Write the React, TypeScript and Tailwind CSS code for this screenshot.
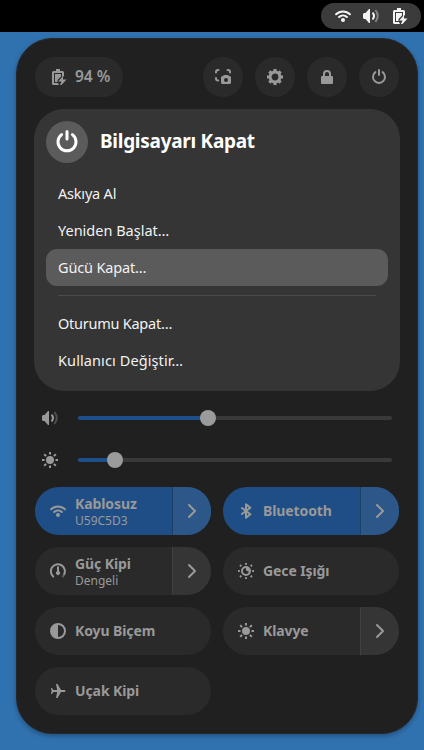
import type { ReactNode } from "react";

function Icon({ children, size = 16 }: { children: ReactNode; size?: number }) {
  return (
    <svg width={size} height={size} viewBox="0 0 16 16" fill="currentColor" className="block shrink-0">
      {children}
    </svg>
  );
}

const line = { fill: "none", stroke: "currentColor", strokeWidth: 2 } as const;

const Wifi = () => (
  <Icon>
    <path {...line} strokeLinecap="round" d="M1.1 6.3a9.8 9.8 0 0 1 13.8 0M4.1 9a5.7 5.7 0 0 1 7.8 0" />
    <circle cx="8" cy="12" r="2" />
  </Icon>
);

const Volume = () => (
  <Icon>
    <path d="M0 6l1-1h1.500L6 1h1v14H6l-3.500-4H1l-1-1z" />
    <path {...line} strokeLinecap="round" d="M10 5.200c1.300 1.700 1.300 3.900 0 5.600" />
    <path {...line} opacity=".4" d="M12.400 2.200c3.100 3.400 3.100 8.200 0 11.600" />
  </Icon>
);

const Battery = () => (
  <Icon>
    <path d="M5 0h4v2h2.500A1.500 1.500 0 0 1 13 3.500V7l-2 1.500V4H3v10h4l1 2H2.500A1.500 1.500 0 0 1 1 14.500v-11A1.500 1.500 0 0 1 2.500 2H5z" />
    <path d="M4 5h6v2.500L6.500 11v2H4z" />
    <path d="M12 7v3.500h3.500L10.500 16H9l1.500-3.500H7.200z" />
  </Icon>
);

const Screenshot = () => (
  <Icon>
    <path {...line} strokeLinecap="round" d="M1 3.500V3a2 2 0 0 1 2-2h.5M12.500 1h.5a2 2 0 0 1 2 2v.5M1 9v.5a2 2 0 0 0 2 2h.2" />
    <path fillRule="evenodd" d="M8 7l1-1h4l1 1h.5A1.500 1.500 0 0 1 16 8.500v5a1.500 1.500 0 0 1-1.500 1.500h-7A1.500 1.500 0 0 1 6 13.500v-5A1.500 1.500 0 0 1 7.500 7zm3 2a2 2 0 1 0 0 4 2 2 0 0 0 0-4z" />
  </Icon>
);

const Gear = () => (
  <Icon>
    <circle cx="8" cy="8" r="4.900" fill="none" stroke="currentColor" strokeWidth="3" />
    <path d="M6.400 0h3.200v2.500H6.400zM6.400 13.500h3.200V16H6.400zM0 6.400h2.500v3.200H0zM13.500 6.400H16v3.200h-2.500z" />
    <path d="M6.400 0h3.200v2.500H6.400zM6.400 13.500h3.200V16H6.400zM0 6.400h2.500v3.200H0zM13.500 6.400H16v3.200h-2.500z" transform="rotate(45 8 8)" />
  </Icon>
);

const Lock = () => (
  <Icon>
    <path {...line} d="M5 8V5a3 3 0 0 1 6 0v3" />
    <rect x="2" y="7" width="12" height="8" rx="1" />
  </Icon>
);

const Power = ({ size = 16 }: { size?: number }) => (
  <Icon size={size}>
    <path {...line} strokeLinecap="round" d="M4.400 3.100a6 6 0 1 0 7.200 0M8 1v5" />
  </Icon>
);

const Sun = () => (
  <Icon>
    <circle cx="8" cy="8" r="4" />
    <path {...line} d="M8 0v2.500M8 13.500V16M0 8h2.500M13.500 8H16M2.200 2.200l1.900 1.900M11.900 11.900l1.900 1.900M13.800 2.200l-1.900 1.900M4.100 11.900l-1.900 1.900" />
  </Icon>
);

const NightLight = () => (
  <Icon>
    <path fillRule="evenodd" d="M8 3a5 5 0 1 0 0 10A5 5 0 0 0 8 3zM7.900 5a2.700 2.700 0 0 0 3 3.500A3 3 0 1 1 7.900 5z" />
    <path {...line} d="M8 0v1.800M8 14.200V16M0 8h1.800M14.200 8H16M2 2l1.300 1.300M12.700 12.700L14 14M14 2l-1.300 1.300M3.300 12.700L2 14" />
  </Icon>
);

const Bluetooth = () => (
  <Icon>
    <path {...line} strokeLinejoin="round" d="M3.300 4.500l9 6.800L8 14.800V1.200l4.300 3.500-9 6.800" />
  </Icon>
);

const Gauge = () => (
  <Icon>
    <path {...line} strokeLinecap="round" d="M3.200 13.500A7 7 0 1 1 14.300 11" />
    <path {...line} opacity=".5" d="M14.300 11A7 7 0 0 1 12.300 14" />
    <path d="M7 3.500h2V8.300a2 2 0 1 1-2 0z" />
  </Icon>
);

const Contrast = () => (
  <Icon>
    <circle cx="8" cy="8" r="7" {...line} />
    <path d="M8 1v14A7 7 0 0 1 8 1z" />
  </Icon>
);

const Plane = () => (
  <Icon>
    <path d="M6 1h1.500L11 7h3.500a1 1 0 0 1 0 2H11l-3.500 6H6l1.200-6H3.500L2 11H1l.6-3L1 5h1l1.500 2h3.700z" />
  </Icon>
);

const Chevron = () => (
  <Icon>
    <path {...line} strokeLinecap="round" strokeLinejoin="round" d="M5 2l6 6-6 6" />
  </Icon>
);

function RoundButton({ children }: { children: ReactNode }) {
  return <button className="flex size-10 items-center justify-center rounded-full bg-[#2a2a2a]">{children}</button>;
}

function MenuItem({ children, active = false, spacing = "" }: { children: string; active?: boolean; spacing?: string }) {
  return (
    <button
      className={`flex h-[37px] w-full items-center rounded-[11px] px-3 text-left text-[14.500px] whitespace-nowrap text-[#f2f2f2] ${spacing} ${active ? "bg-[#5b5b5b]" : ""}`}
    >
      {children}
    </button>
  );
}

function Slider({ icon, value }: { icon: ReactNode; value: number }) {
  return (
    <div className="flex h-[42px] items-center gap-5 px-[7px]">
      {icon}
      <div className="relative h-1 flex-1 rounded-full bg-[#393939]">
        <div className="h-1 rounded-full bg-[#1f4f88]" style={{ width: value }} />
        <div className="absolute -top-1.5 size-4 -translate-x-1/2 rounded-full bg-[#9b9b9b]" style={{ left: value }} />
      </div>
    </div>
  );
}

interface ToggleProps {
  icon: ReactNode;
  title: string;
  subtitle?: string;
  on?: boolean;
  menu?: boolean;
}

function Toggle({ icon, title, subtitle, on = false, menu = false }: ToggleProps) {
  return (
    <div className={`flex h-12 overflow-hidden rounded-full ${on ? "bg-[#1f4e86]" : "bg-[#2a2a2a]"}`}>
      <button className="flex flex-1 items-center gap-[9px] pl-[15px] text-left">
        {icon}
        <span className={`flex flex-col whitespace-nowrap ${subtitle ? "pt-px" : "pb-px"}`}>
          <span className="text-[14px] leading-[18px] font-bold tracking-[-0.1px]">{title}</span>
          {subtitle && <span className="text-[12px] leading-[16px]">{subtitle}</span>}
        </span>
      </button>
      {menu && (
        <button
          className={`flex w-[39px] items-center justify-center border-l ${on ? "border-[#1d406b] bg-[#2c5788]" : "border-[#414141] bg-[#353535]"}`}
        >
          <Chevron />
        </button>
      )}
    </div>
  );
}

export default function App() {
  return (
    <div className="flex h-[750px] w-[424px] flex-col overflow-hidden bg-[#3072b0] font-['Noto_Sans',sans-serif]">
      <header className="flex h-8 shrink-0 justify-end bg-black pt-[3px] pr-[3px]">
        <div className="flex h-[26px] w-[100px] items-center gap-3 rounded-full bg-[#3b3b3b] pl-3.5 text-[#f4f4f4]">
          <Wifi />
          <Volume />
          <span className="ml-px">
            <Battery />
          </span>
        </div>
      </header>

      <main className="mt-1.5 ml-4 h-[696px] w-[402px] shrink-0 rounded-[36px] border border-[#282828] bg-[#202020] px-[18px] pt-[18px] text-[#999999] shadow-[0_2px_5px_rgba(0,0,0,0.3)]">
        <div className="flex items-center justify-between">
          <button className="flex h-10 w-[88px] items-center gap-2 rounded-full bg-[#2a2a2a] pl-4 text-[15.500px] font-semibold whitespace-nowrap">
            <Battery />
            94 %
          </button>
          <div className="flex gap-3">
            <RoundButton><Screenshot /></RoundButton>
            <RoundButton><Gear /></RoundButton>
            <RoundButton><Lock /></RoundButton>
            <RoundButton><Power /></RoundButton>
          </div>
        </div>

        <section className="-mx-px mt-3 h-[282px] rounded-[30px] bg-[#353535] p-3 text-white">
          <div className="flex items-center gap-3">
            <div className="flex size-[42px] items-center justify-center rounded-full bg-[#5b5b5b]">
              <Power size={24} />
            </div>
            <h1 className="pb-0.5 text-[19px] font-bold tracking-[-0.28px] whitespace-nowrap">Bilgisayarı Kapat</h1>
          </div>
          <div className="mt-3">
            <MenuItem spacing="tracking-[-0.2px]">Askıya Al</MenuItem>
            <MenuItem>Yeniden Başlat…</MenuItem>
            <MenuItem active spacing="tracking-[-0.15px]">Gücü Kapat…</MenuItem>
            <div className="mx-3 my-[9px] h-px bg-[#4b4b4b]" />
            <MenuItem spacing="tracking-[-0.25px]">Oturumu Kapat…</MenuItem>
            <MenuItem spacing="tracking-[0.1px]">Kullanıcı Değiştir…</MenuItem>
          </div>
        </section>

        <div className="mt-1.5">
          <Slider icon={<Volume />} value={130} />
          <Slider icon={<Sun />} value={37} />
        </div>

        <div className="mt-1.5 grid grid-cols-2 gap-3">
          <Toggle icon={<Wifi />} title="Kablosuz" subtitle="U59C5D3" on menu />
          <Toggle icon={<Bluetooth />} title="Bluetooth" on menu />
          <Toggle icon={<Gauge />} title="Güç Kipi" subtitle="Dengeli" menu />
          <Toggle icon={<NightLight />} title="Gece Işığı" />
          <Toggle icon={<Contrast />} title="Koyu Biçem" />
          <Toggle icon={<Sun />} title="Klavye" menu />
          <Toggle icon={<Plane />} title="Uçak Kipi" />
        </div>
      </main>
    </div>
  );
}
